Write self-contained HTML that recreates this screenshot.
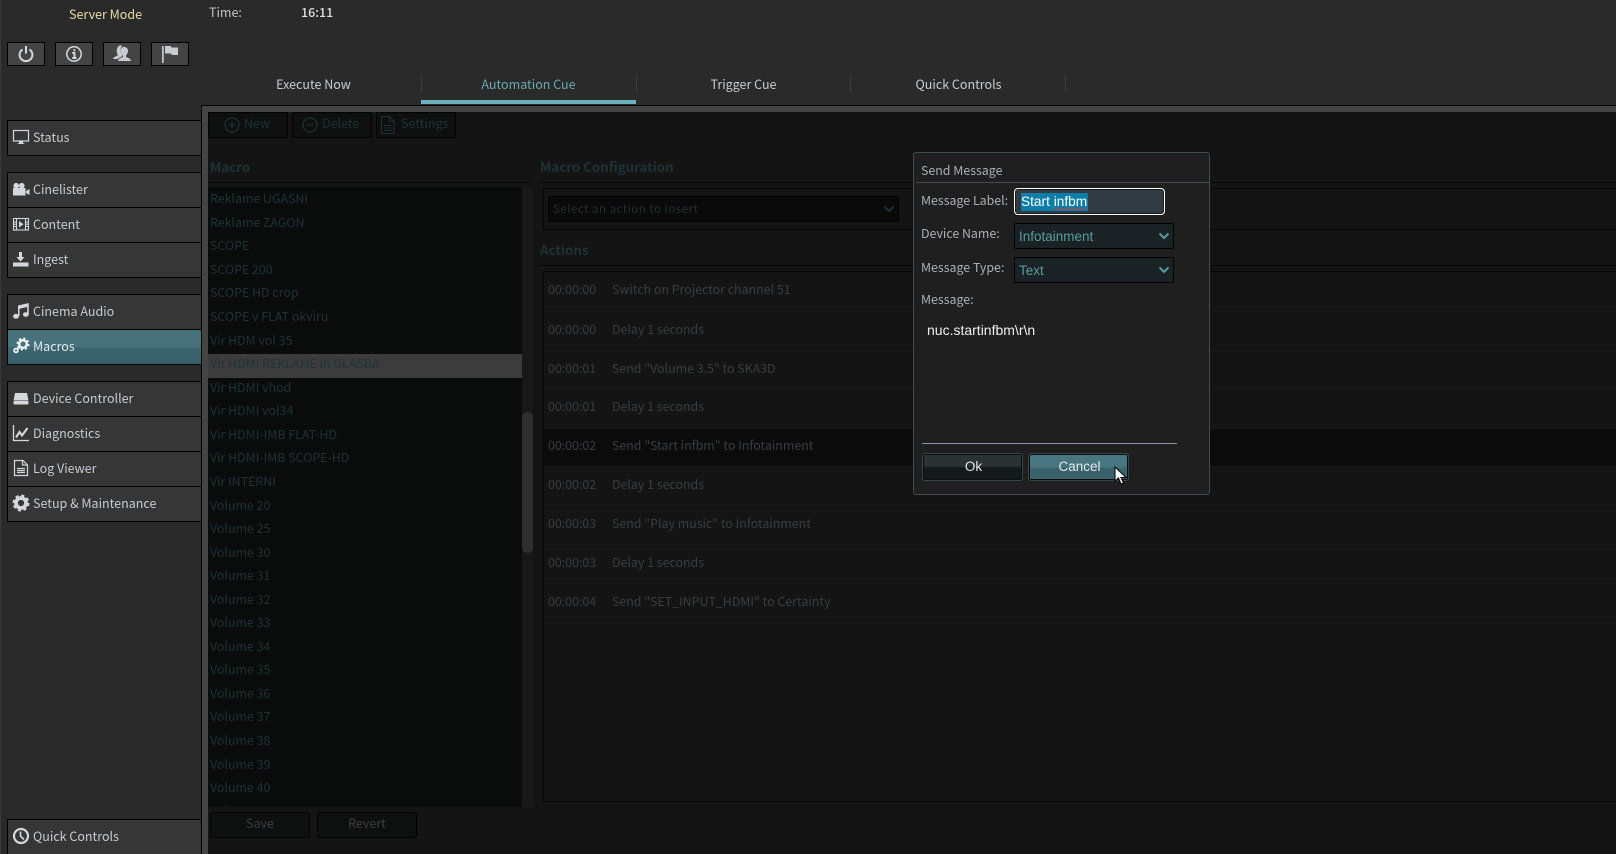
<!DOCTYPE html>
<html><head><meta charset="utf-8"><style>
*{box-sizing:border-box}
html,body{margin:0;padding:0;width:1616px;height:854px;overflow:hidden;background:#2a2a2a}
body{position:relative;font-family:"Noto Sans CJK JP","Liberation Sans",sans-serif;font-size:12.5px;color:#c8ccd0}
.a{position:absolute}
.t{position:absolute;white-space:nowrap;line-height:20px;height:20px}
.tb{position:absolute;left:7px;width:38px;height:24px;top:42px;background:#444;border:1px solid #000}
.sb{position:absolute;left:7px;width:200px;height:36px;background:#363636;border:1px solid #000;color:#c4ccd4}
.sb span{position:absolute;left:25px;top:6px;line-height:20px;white-space:nowrap}
.sb svg{position:absolute;left:4px;top:7px}
.tab{position:absolute;top:73.5px;width:215px;text-align:center;line-height:20px;color:#c8ccd0}
.sep{position:absolute;top:74px;width:1px;height:18px;background:#3e3e3e}
.li{position:absolute;left:210px;color:#1f3238;white-space:nowrap;line-height:20px;font-size:12.4px}
.h{position:absolute;height:1px;background:#050505}
.tbtn{position:absolute;top:112px;height:26px;width:80px;background:#0e0f0f;border:1px solid #000;color:#1f3238;line-height:20px}
.rt{position:absolute;left:548px;color:#3a3d3f;white-space:nowrap;line-height:20px;font-size:12.4px}
.rx{position:absolute;left:612px;color:#3a3d3f;white-space:nowrap;line-height:20px;font-size:12.4px}
.rl{position:absolute;left:544px;right:0;height:1px;background:#191919}
.lb{position:absolute;left:921px;color:#a8b0b8;white-space:nowrap;line-height:20px;font-size:12.4px}
.sel{position:absolute;left:1014px;width:160px;height:26px;background:#1a2226;border:1px solid #000;border-radius:2px;color:#5a9c9e;font:13.5px/26px "Liberation Sans",sans-serif;padding-left:4px}
.dbtn{position:absolute;top:453px;height:28px;width:101px;border:1px solid #34474c;border-radius:3px;box-shadow:inset 0 0 0 1px #0c0c0c;color:#e4e8ea;text-align:center;font:13.5px/26px "Liberation Sans",sans-serif}
.h3{position:absolute;white-space:nowrap;line-height:20px;height:20px;color:#1f3238;font-weight:700;font-size:13.3px}
</style></head><body>
<div class="a" style="left:0;top:0;width:1px;height:854px;background:#3a3a3a"></div>
<div class="t" style="left:69px;top:4px;color:#e6dca4">Server Mode</div>
<div class="t" style="left:209px;top:2px;color:#c4c4c4">Time:</div>
<div class="t" style="left:301px;top:2px;color:#e0e0e0;font-weight:500">16:11</div>

<div class="tb" style="left:7px"><svg class="a" style="left:9px;top:2px" width="18" height="18" viewBox="0 0 18 18" fill="none" stroke="#d4d8dc" stroke-width="2"><path d="M5.500 4.400a6.400 6.400 0 1 0 7 0"/><path d="M9 1v7.500"/></svg></div>
<div class="tb" style="left:55px"><svg class="a" style="left:9px;top:2px" width="18" height="18" viewBox="0 0 18 18" fill="none" stroke="#d4d8dc" stroke-width="1.500"><circle cx="9" cy="9" r="7.200"/><path d="M7.300 8H9.500V13M7.300 13h4.200M9.300 4.300v2" stroke-width="1.900"/></svg></div>
<div class="tb" style="left:103px"><svg class="a" style="left:8px;top:2px" width="20" height="19" viewBox="0 0 20 19" fill="#c8ccd0"><path d="M10 2.500c3-1.800 6 .3 6 3.500 0 2-1 3.500-2 4.500v1.500c2 .8 4.500 1.500 5 4H6c.5-2.500 3-3.200 5-4v-1.500C9 9 8 4.500 10 2.500z"/><path d="M7.500 .5c1-.5 2-.3 2.500.5-2 2-1.500 6.500 .3 8.800V11l-4.800 3H1c.3-1.800 3-2.600 4.500-3.200V9C4 7 4.500 2 7.500 .5z"/></svg></div>
<div class="tb" style="left:151px"><svg class="a" style="left:9px;top:2px" width="18" height="18" viewBox="0 0 18 18"><rect x="1" y="1" width="1.800" height="17" fill="#b8c4d0"/><path d="M4 1h5.500l1 1.500H17v7.500h-6l-1-1.500H4z" fill="#c8ccd0"/></svg></div>

<div class="tab" style="left:206px">Execute Now</div>
<div class="tab" style="left:421px;color:#6aa8b0">Automation Cue</div>
<div class="tab" style="left:636px">Trigger Cue</div>
<div class="tab" style="left:851px">Quick Controls</div>
<div class="sep" style="left:421px"></div><div class="sep" style="left:636px"></div><div class="sep" style="left:850px"></div><div class="sep" style="left:1065px"></div>
<div class="a" style="left:421px;top:100px;width:215px;height:4px;background:#6cb2bc"></div>

<div class="sb" style="top:120px"><svg width="18" height="18" viewBox="0 0 18 18" fill="none"><rect x="1.500" y="2.500" width="15" height="10.500" stroke="#d4d8dc" stroke-width="1.200"/><path d="M7 13.500h4v1.500l2 1H5l2-1z" fill="#d4d8dc"/></svg><span>Status</span></div>
<div class="sb" style="top:172px"><svg width="18" height="18" viewBox="0 0 18 18" fill="#d4d8dc"><circle cx="4.200" cy="5.700" r="2.800"/><circle cx="9.800" cy="5.700" r="2.800"/><rect x="1" y="8" width="12.500" height="7.500"/><path d="M14 11l3.500-2v6L14 13z"/></svg><span>Cinelister</span></div>
<div class="sb" style="top:207px"><svg width="18" height="18" viewBox="0 0 18 18" fill="none" stroke="#d4d8dc"><rect x="1.500" y="3.500" width="15" height="11.500" stroke-width="1.100"/><path d="M4.500 3.500v11.500M13.500 3.500v11.500M1.500 7h3M1.500 9.200h3M1.500 11.500h3M13.500 7h3M13.500 9.200h3M13.500 11.500h3" stroke-width="1.100"/><path d="M7 6l4.500 3.200L7 12.500z" fill="#d4d8dc" stroke="none"/></svg><span>Content</span></div>
<div class="sb" style="top:242px"><svg width="18" height="18" viewBox="0 0 18 18" fill="#d4d8dc"><rect x="1" y="12.500" width="15.500" height="4"/><path d="M7 2h3v5h2.500L8.500 11.500 4.500 7H7z"/></svg><span>Ingest</span></div>
<div class="sb" style="top:294px"><svg width="18" height="18" viewBox="0 0 18 18" fill="#d4d8dc"><path d="M6 3.500L16.800 1v11.500h-1.600V5L7.500 6.700V14H6z"/><ellipse cx="4" cy="14.300" rx="3" ry="2.400"/><ellipse cx="13.800" cy="12.500" rx="2.900" ry="2.300"/></svg><span>Cinema Audio</span></div>
<div class="sb" style="top:329px;background:linear-gradient(#47727c 0,#47727c 50%,#3d6570 52%,#38606a 100%);color:#e0e8ea"><svg width="18" height="18" viewBox="0 0 18 18" fill="none" stroke="#f0f4f6"><circle cx="11" cy="7" r="3.800" stroke-width="2.400"/><circle cx="11" cy="7" r="5.600" stroke-width="1.800" stroke-dasharray="2.200 2.200"/><circle cx="4" cy="13.500" r="1.900" stroke-width="1.700"/><circle cx="7" cy="10.300" r="1" stroke-width="1.200"/></svg><span>Macros</span></div>
<div class="sb" style="top:381px"><svg width="18" height="18" viewBox="0 0 18 18" fill="#d4d8dc"><path d="M3 4h12l1.500 7.500H1.500z"/><rect x="1.500" y="12" width="15" height="3.500" rx="1"/></svg><span>Device Controller</span></div>
<div class="sb" style="top:416px"><svg width="18" height="18" viewBox="0 0 18 18" fill="none" stroke="#d4d8dc"><path d="M1.500 1v15.500h15.500" stroke-width="1.300"/><path d="M4 13.500L7.500 8l2.500 3.500L15.500 4" stroke-width="2.100"/></svg><span>Diagnostics</span></div>
<div class="sb" style="top:451px"><svg width="18" height="18" viewBox="0 0 18 18" fill="none" stroke="#d4d8dc" stroke-width="1.200"><path d="M2.500 1.500h8.500l4.500 4.500v10.500h-13z"/><path d="M10.500 1.500V6h5M5 9.500h8M5 11.500h8M5 13.500h8"/></svg><span>Log Viewer</span></div>
<div class="sb" style="top:486px"><svg width="18" height="18" viewBox="0 0 18 18" fill="none" stroke="#d4d8dc"><circle cx="9" cy="9" r="5" stroke-width="3.800"/><circle cx="9" cy="9" r="7.200" stroke-width="2.600" stroke-dasharray="3 2.650"/></svg><span>Setup &amp; Maintenance</span></div>
<div class="sb" style="top:819px"><svg width="18" height="18" viewBox="0 0 18 18" fill="none" stroke="#d4d8dc"><circle cx="9" cy="9" r="7" stroke-width="2.200"/><path d="M8.500 4.500V9l3.500 3.500" stroke-width="1.600"/></svg><span>Quick Controls</span></div>

<!-- main panel -->
<div class="a" style="left:201px;top:105px;right:0;bottom:0;background:#000"></div>
<div class="a" style="left:202px;top:106px;right:0;bottom:0;background:#444"></div>
<div class="a" style="left:208px;top:112px;right:0;bottom:0;background:#141414"></div>

<div class="tbtn" style="left:208px"><svg class="a" style="left:14px;top:3px" width="18" height="18" viewBox="0 0 18 18" fill="none" stroke="#1f3238" stroke-width="1.200"><circle cx="9" cy="9" r="7"/><path d="M9 5.500v7M5.500 9h7"/></svg><span class="a" style="left:35px;top:0">New</span></div>
<div class="tbtn" style="left:292px"><svg class="a" style="left:8px;top:3px" width="18" height="18" viewBox="0 0 18 18" fill="none" stroke="#1f3238" stroke-width="1.200"><circle cx="9" cy="9" r="7"/><path d="M5.500 9h7"/></svg><span class="a" style="left:29px;top:0">Delete</span></div>
<div class="tbtn" style="left:376px"><svg class="a" style="left:2px;top:2px" width="18" height="20" viewBox="0 0 18 20" fill="none" stroke="#1f3238"><path d="M2.500 1.500h8l4.500 4.500v12.500H2.500z"/><path d="M10.500 1.500V6H15M5 10.500h7.500M5 13h7.500M5 15.500h7.500"/></svg><span class="a" style="left:24px;top:0">Settings</span></div>

<div class="h3" style="left:210px;top:157px">Macro</div>
<div class="h" style="left:208px;top:182px;width:322px"></div>
<div class="a" style="left:208px;top:187px;width:314px;height:620px;background:#0a0c0c;overflow:hidden">
<div class="a" style="left:0;top:167px;width:314px;height:24px;background:#3c3c3c"></div>
</div>
<div class="a" style="left:522px;top:187px;width:11px;height:620px;background:#181818"></div>
<div class="a" style="left:522px;top:412px;width:11px;height:141px;background:#2e2e2e;border-radius:5px"></div>
<div class="a" style="left:208px;top:187px;width:314px;height:620px;overflow:hidden">
<div class="li" style="left:2px;top:1px">Reklame UGASNI</div>
<div class="li" style="left:2px;top:25px">Reklame ZAGON</div>
<div class="li" style="left:2px;top:48px">SCOPE</div>
<div class="li" style="left:2px;top:72px">SCOPE 200</div>
<div class="li" style="left:2px;top:95px">SCOPE HD crop</div>
<div class="li" style="left:2px;top:119px">SCOPE v FLAT okviru</div>
<div class="li" style="left:2px;top:143px">Vir HDM vol 35</div>
<div class="li" style="left:2px;top:166px">Vir HDMI REKLAME in GLASBA</div>
<div class="li" style="left:2px;top:190px">Vir HDMI vhod</div>
<div class="li" style="left:2px;top:213px">Vir HDMI vol34</div>
<div class="li" style="left:2px;top:237px">Vir HDMI-IMB FLAT-HD</div>
<div class="li" style="left:2px;top:260px">Vir HDMI-IMB SCOPE-HD</div>
<div class="li" style="left:2px;top:284px">Vir INTERNI</div>
<div class="li" style="left:2px;top:308px">Volume 20</div>
<div class="li" style="left:2px;top:331px">Volume 25</div>
<div class="li" style="left:2px;top:355px">Volume 30</div>
<div class="li" style="left:2px;top:378px">Volume 31</div>
<div class="li" style="left:2px;top:402px">Volume 32</div>
<div class="li" style="left:2px;top:425px">Volume 33</div>
<div class="li" style="left:2px;top:449px">Volume 34</div>
<div class="li" style="left:2px;top:472px">Volume 35</div>
<div class="li" style="left:2px;top:496px">Volume 36</div>
<div class="li" style="left:2px;top:519px">Volume 37</div>
<div class="li" style="left:2px;top:543px">Volume 38</div>
<div class="li" style="left:2px;top:567px">Volume 39</div>
<div class="li" style="left:2px;top:590px">Volume 40</div>
<div class="li" style="left:2px;top:614px">Volume 41</div>
</div>
<div class="a" style="left:210px;top:812px;width:100px;height:26px;background:#0e0f0f;border:1px solid #000;border-radius:3px;color:#3c3f41;text-align:center;line-height:20px">Save</div>
<div class="a" style="left:317px;top:812px;width:100px;height:26px;background:#0e0f0f;border:1px solid #000;border-radius:3px;color:#3c3f41;text-align:center;line-height:20px">Revert</div>

<div class="h3" style="left:540px;top:157px">Macro Configuration</div>
<div class="h" style="left:538px;top:182px;right:0"></div>
<div class="a" style="left:543px;top:188px;right:0;height:42px;border:1px solid #050505;border-right:0"></div>
<div class="a" style="left:548px;top:196px;width:351px;height:26px;background:#0a0a0a;border:1px solid #000;border-radius:2px"></div>
<div class="t" style="left:553px;top:199px;color:#1f3238;font-size:11.5px;letter-spacing:.5px">Select an action to insert</div>
<svg class="a" style="left:883px;top:205px" width="12" height="8" viewBox="0 0 12 8" fill="none" stroke="#1f3238" stroke-width="2"><path d="M1.500 1.500L6 6l4.500-4.500"/></svg>

<div class="h3" style="left:540px;top:240px">Actions</div>
<div class="h" style="left:538px;top:265px;right:0"></div>
<div class="a" style="left:543px;top:271px;right:0;height:531px;border:1px solid #050505;border-right:0"></div>
<div class="a" style="left:544px;top:428px;right:0;height:38px;background:#0b0b0b"></div>
<div class="rl" style="top:311px"></div><div class="rl" style="top:350px"></div><div class="rl" style="top:389px"></div><div class="rl" style="top:428px"></div><div class="rl" style="top:466px"></div><div class="rl" style="top:505px"></div><div class="rl" style="top:544px"></div><div class="rl" style="top:583px"></div><div class="rl" style="top:622px"></div>
<div class="rt" style="top:279px">00:00:00</div><div class="rx" style="top:279px">Switch on Projector channel 51</div>
<div class="rt" style="top:319px">00:00:00</div><div class="rx" style="top:319px">Delay 1 seconds</div>
<div class="rt" style="top:358px">00:00:01</div><div class="rx" style="top:358px">Send "Volume 3.5" to SKA3D</div>
<div class="rt" style="top:396px">00:00:01</div><div class="rx" style="top:396px">Delay 1 seconds</div>
<div class="rt" style="top:435px">00:00:02</div><div class="rx" style="top:435px">Send "Start infbm" to Infotainment</div>
<div class="rt" style="top:474px">00:00:02</div><div class="rx" style="top:474px">Delay 1 seconds</div>
<div class="rt" style="top:513px">00:00:03</div><div class="rx" style="top:513px">Send "Play music" to Infotainment</div>
<div class="rt" style="top:552px">00:00:03</div><div class="rx" style="top:552px">Delay 1 seconds</div>
<div class="rt" style="top:591px">00:00:04</div><div class="rx" style="top:591px">Send "SET_INPUT_HDMI" to Certainty</div>

<!-- dialog -->
<div class="a" style="left:913px;top:152px;width:297px;height:343px;background:#1f1f1f;border:1px solid #3f4d52;border-radius:3px"></div>
<div class="lb" style="top:160px">Send Message</div>
<div class="a" style="left:916px;top:182px;width:293px;height:1px;background:#3f4d52"></div>
<div class="lb" style="top:190px">Message Label:</div>
<div class="a" style="left:1014px;top:188px;width:151px;height:27px;background:#333b42;border:1px solid #fff;border-radius:4px;box-shadow:inset 0 0 0 1px #1a1a1a"></div>
<div class="a" style="left:1021px;top:193px;width:67px;height:18px;background:#0a7ea8"></div>
<div class="a" style="left:1021px;top:193px;color:#fff;font:13.7px/18px 'Liberation Sans',sans-serif;white-space:nowrap">Start infbm</div>
<svg class="a" style="left:1054px;top:207px" width="34" height="3" viewBox="0 0 34 3" fill="none" stroke="#e03030" stroke-width=".8"><path d="M0 1l2 1 2-1 2 1 2-1 2 1 2-1 2 1 2-1 2 1 2-1 2 1 2-1 2 1 2-1 2 1 2-1"/></svg>
<div class="lb" style="top:223px">Device Name:</div>
<div class="sel" style="top:223px">Infotainment</div>
<svg class="a" style="left:1158px;top:232px" width="12" height="8" viewBox="0 0 12 8" fill="none" stroke="#5a9c9e" stroke-width="2"><path d="M1.500 1.500L6 6l4.500-4.500"/></svg>
<div class="lb" style="top:257px">Message Type:</div>
<div class="sel" style="top:257px">Text</div>
<svg class="a" style="left:1158px;top:266px" width="12" height="8" viewBox="0 0 12 8" fill="none" stroke="#5a9c9e" stroke-width="2"><path d="M1.500 1.500L6 6l4.500-4.500"/></svg>
<div class="lb" style="top:289px">Message:</div>
<div class="a" style="left:927px;top:320px;color:#f0f0f0;font:14px/20px 'Liberation Sans',sans-serif;white-space:nowrap">nuc.startinfbm\r\n</div>
<div class="a" style="left:922px;top:443px;width:255px;height:1px;background:#8a9498"></div>
<div class="dbtn" style="left:922px;background:linear-gradient(#2c3234 0,#2c3234 45%,#14191c 55%,#14191c 100%)"><span style="position:relative;left:1px">Ok</span></div>
<div class="dbtn" style="left:1028px;background:linear-gradient(#487680 0,#487680 50%,#3a626c 55%,#3a626c 100%)"><span style="position:relative;left:1px">Cancel</span></div>
<svg class="a" style="left:1114px;top:466px" width="14" height="20" viewBox="0 0 14 20"><path d="M1 1v14l3.500-3 2.500 6 2.500-1-2.500-5.500H12z" fill="#fff" stroke="#000" stroke-width="1"/></svg>
</body></html>
